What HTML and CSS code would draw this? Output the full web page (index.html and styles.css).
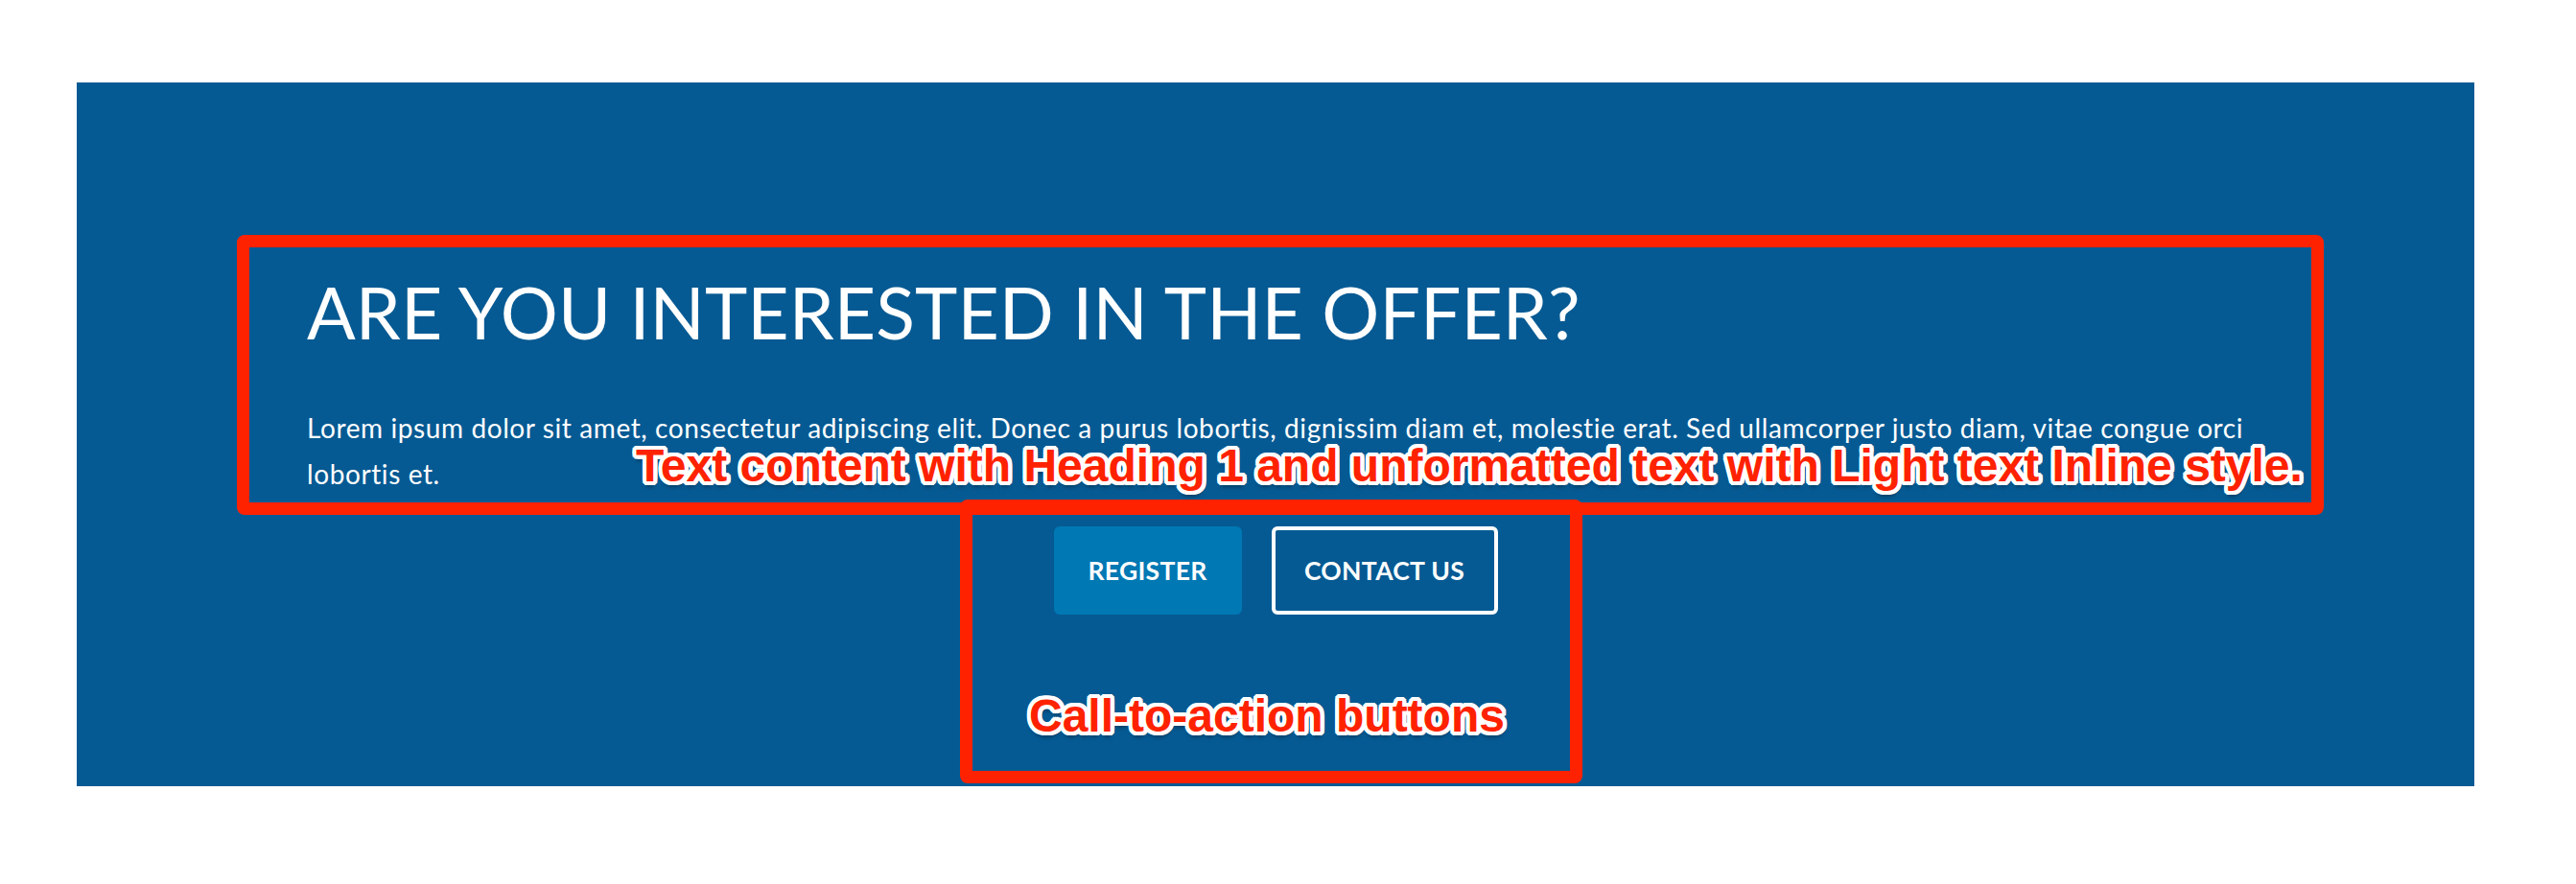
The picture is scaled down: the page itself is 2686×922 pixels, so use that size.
FILE: index.html
```html
<!DOCTYPE html>
<html lang="en">
<head>
<meta charset="utf-8">
<title>Offer banner</title>
<link rel="stylesheet" href="styles.css">
</head>
<body>
<div class="page">
  <section class="banner">
    <div class="text-content">
      <h1 class="heading">ARE YOU INTERESTED IN THE OFFER?</h1>
      <p class="lead">Lorem ipsum dolor sit amet, consectetur adipiscing elit. Donec a purus lobortis, dignissim diam et, molestie erat. Sed ullamcorper justo diam, vitae congue orci lobortis et.</p>
    </div>
    <div class="cta">
      <a class="btn btn-primary" href="#">REGISTER</a>
      <a class="btn btn-outline" href="#">CONTACT US</a>
    </div>

    <div class="note-box note-box-text"></div>
    <div class="note-box note-box-cta"></div>
    <div class="note-label note-label-text">Text content with Heading 1 and unformatted text with Light text Inline style.</div>
    <div class="note-label note-label-cta">Call-to-action buttons</div>
  </section>
</div>
</body>
</html>
```
FILE: styles.css
```css
html, body {
  margin: 0;
  padding: 0;
  background: #ffffff;
}

.page {
  padding: 86px 106px 102px 80px;
}

.banner {
  position: relative;
  background: #065a93;
  color: #ffffff;
  font-family: "Lato", "Open Sans", sans-serif;
  font-variant-ligatures: none;
  padding: 194px 240px 179px 240px;
  display: flex;
  flex-direction: column;
}

.heading {
  margin: 0;
  font-size: 75px;
  line-height: 90px;
  font-weight: 400;
  letter-spacing: 0.1px;
}

.lead {
  margin: 52px 0 0 0;
  font-size: 28px;
  line-height: 48px;
  font-weight: 400;
  letter-spacing: 0.6px;
}

.cta {
  margin-top: 31px;
  display: flex;
  justify-content: center;
  gap: 31px;
}

.btn {
  box-sizing: border-box;
  height: 92px;
  display: inline-flex;
  align-items: center;
  justify-content: center;
  padding: 0 30px;
  border: 4px solid transparent;
  border-radius: 6px;
  color: #ffffff;
  text-decoration: none;
  font-family: "Lato", "Open Sans", sans-serif;
  font-weight: 700;
  font-size: 26.5px;
  letter-spacing: 0.3px;
}

.btn-primary {
  background: #0078b3;
  border-color: #0078b3;
  width: 196px;
}

.btn-outline {
  background: transparent;
  border-color: #ffffff;
  width: 236px;
}

/* annotation overlay */
.note-box {
  position: absolute;
  box-sizing: border-box;
  border: 13px solid #ff2200;
  border-radius: 8px;
}

.note-box-text {
  left: 167px;
  top: 159px;
  width: 2176px;
  height: 292px;
}

.note-box-cta {
  left: 921px;
  top: 435px;
  width: 649px;
  height: 296px;
}

.note-label {
  position: absolute;
  font-family: "Liberation Sans", Arial, sans-serif;
  font-weight: 700;
  font-size: 48px;
  line-height: 56px;
  color: #ff2200;
  white-space: nowrap;
  text-shadow:
    4px 0 0 #fff, -4px 0 0 #fff, 0 4px 0 #fff, 0 -4px 0 #fff,
    3px 3px 0 #fff, -3px 3px 0 #fff, 3px -3px 0 #fff, -3px -3px 0 #fff,
    4px 2px 0 #fff, -4px 2px 0 #fff, 4px -2px 0 #fff, -4px -2px 0 #fff,
    2px 4px 0 #fff, -2px 4px 0 #fff, 2px -4px 0 #fff, -2px -4px 0 #fff,
    0 6px 4px rgba(0, 0, 0, 0.35);
}

.note-label-text {
  left: 583px;
  top: 372px;
}

.note-label-cta {
  left: 993px;
  top: 633px;
}
```
